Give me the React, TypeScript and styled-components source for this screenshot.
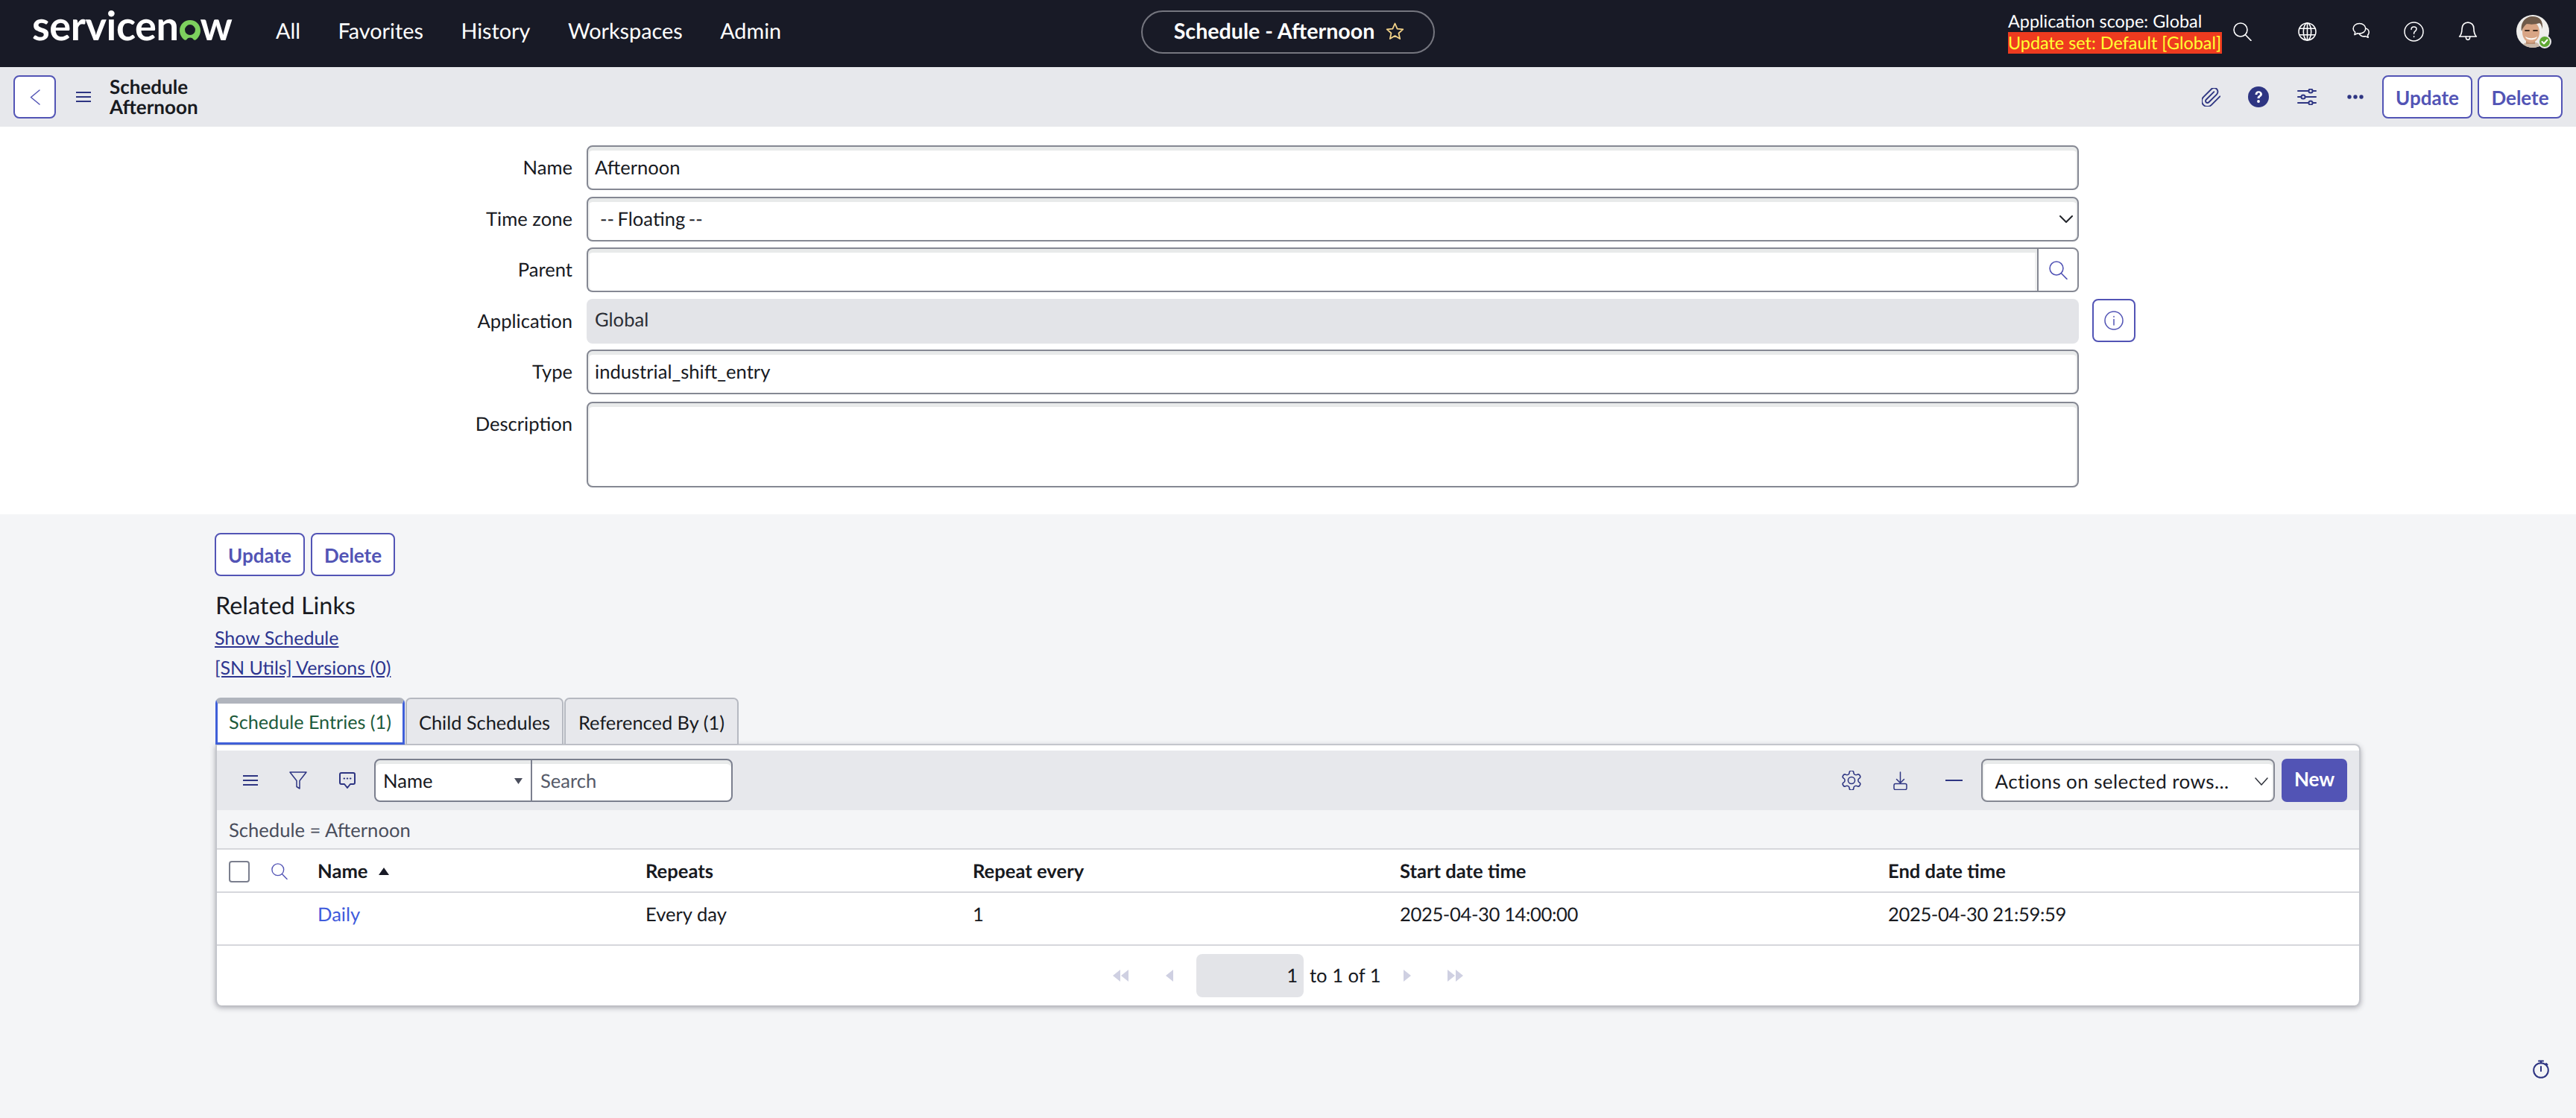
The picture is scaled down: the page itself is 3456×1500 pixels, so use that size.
import React from "react";
import styled, { createGlobalStyle } from "styled-components";

const Global = createGlobalStyle`
  html, body { margin: 0; padding: 0; background: #f4f5f7; }
  body {
    width: 3456px; height: 1500px; overflow: hidden;
    font-family: Lato, "Liberation Sans", sans-serif;
    font-size: 25.6px; color: #181a1f;
    text-rendering: geometricPrecision;
    -webkit-font-smoothing: antialiased;
  }
  * { box-sizing: border-box; }
`;

const Page = styled.div`
  width: 3456px; height: 1500px; display: flex; flex-direction: column;
`;

/* ---------- drawing helper ---------- */
const Glyph = styled.svg<{ $w: number; $h?: number; $c?: string; $sw?: number; $butt?: boolean }>`
  width: ${(p) => p.$w}px;
  height: ${(p) => p.$h ?? p.$w}px;
  flex: none;
  display: block;
  fill: none;
  stroke: ${(p) => p.$c ?? "#2e3582"};
  stroke-width: ${(p) => p.$sw ?? 1.5};
  stroke-linecap: ${(p) => (p.$butt ? "butt" : "round")};
  stroke-linejoin: round;
`;

/* ---------- top bar ---------- */
const TopBar = styled.header`
  height: 90px; flex: none; background: #181a26; color: #fff;
  display: grid; grid-template-columns: 1531px 394px 1fr; align-items: center;
`;
const BrandNav = styled.div`
  display: flex; align-items: center; padding-left: 43px;
`;
const Logo = styled.div`
  width: 266px; height: 54px; display: flex; align-items: baseline; margin-bottom: 22px;
  font-size: 54px; font-weight: 700; letter-spacing: -0.4px; color: #fff; line-height: 1;
`;
const LogoO = styled(Glyph)`
  margin: 0 0 0 1px;
`;
const Nav = styled.nav`
  display: flex; align-items: center; margin-left: 61px; gap: 50.5px; margin-bottom: 6px;
`;
const NavItem = styled.span`
  font-size: 28.8px; color: #fff; white-space: nowrap;
`;
const TitlePill = styled.div`
  height: 58px; margin-bottom: 4px; border: 2px solid #75767f; border-radius: 29px; padding: 0 0 2px 3px;
  display: flex; align-items: center; justify-content: center; gap: 15px;
  font-size: 28.6px; font-weight: 700; color: #fff; white-space: nowrap;
`;
const TopRight = styled.div`
  display: flex; align-items: center; padding-left: 769px; height: 90px;
`;
const Scope = styled.div`
  display: flex; flex-direction: column; align-items: flex-start; width: 302px;
  font-size: 23.4px; margin-bottom: 4px;
`;
const ScopeLine = styled.span`
  line-height: 29px; height: 29px; white-space: nowrap;
`;
const UpdateSet = styled.span`
  line-height: 29px; height: 29px; white-space: nowrap;
  background: #ee3b1f; color: #ffff33; padding-right: 1px;
`;
const TopIcons = styled.div`
  display: flex; align-items: center; margin-bottom: 6px;
`;
const TopIconSlot = styled.span<{ $w: number }>`
  width: ${(p) => p.$w}px; display: flex;
`;
const Avatar = styled.div`
  position: relative; width: 44px; height: 44px;
`;
const AvatarPhoto = styled(Glyph)`
  border-radius: 50%;
`;
const AvatarBadge = styled.span`
  position: absolute; right: -3px; bottom: -1px; width: 18px; height: 18px; border-radius: 50%;
  background: #5ea832; border: 2px solid #e9e9ea; display: flex; align-items: center; justify-content: center;
`;

/* ---------- sub header ---------- */
const SubHeader = styled.div`
  height: 80px; flex: none; background: #e7e8ec;
  display: flex; align-items: center; padding: 0 18px;
`;
const OutlineButton = styled.button<{ $w: number }>`
  width: ${(p) => p.$w}px; height: 58px; padding: 1px 0 0; flex: none;
  background: #fff; border: 2px solid #5254b5; border-radius: 8px;
  display: flex; align-items: center; justify-content: center;
  font-family: inherit; font-size: 26px; font-weight: 700; color: #5254b5;
`;
const Crumb = styled.div`
  display: flex; align-items: center; margin-left: 27px; gap: 25px; margin-top: -1px;
`;
const CrumbTitle = styled.div`
  font-size: 26px; font-weight: 700; line-height: 27px; color: #181a1f;
`;
const SubActions = styled.div`
  margin-left: auto; display: flex; align-items: center;
`;
const ActionSlot = styled.span<{ $w: number }>`
  width: ${(p) => p.$w}px; display: flex;
`;
const ButtonPair = styled.div<{ $gap: number }>`
  display: flex; gap: ${(p) => p.$gap}px;
`;

/* ---------- form ---------- */
const FormPanel = styled.section`
  height: 520px; flex: none; background: #fff; padding: 25px 0 0 0;
`;
const FormRow = styled.div<{ $h?: number; $after?: number }>`
  display: grid; grid-template-columns: 768px 2002px auto; column-gap: 19px;
  padding-left: 0; height: ${(p) => p.$h ?? 58}px; margin-bottom: ${(p) => p.$after ?? 10.5}px;
`;
const Label = styled.label`
  text-align: right; font-size: 25.6px; line-height: 60px; color: #181a1f;
`;
const FieldBase = styled.div`
  height: 100%; width: 100%; border: 2px solid #858893; border-radius: 8px; background: #fff;
  box-shadow: inset 0 5px 0 #e8eaea, inset 2px 0 0 #f0f1f1, inset -2px 0 0 #f0f1f1;
  font-size: 25.6px; line-height: 54px; padding: 0 9px; display: flex; align-items: center;
  justify-content: space-between; color: #181a1f;
`;
const SelectText = styled.span`
  padding-left: 7px; word-spacing: -2px;
`;
const SelectChevron = styled(Glyph)`
  margin-right: -3px;
`;
const ReadOnly = styled.div`
  height: 100%; background: #e3e4e8; border-radius: 8px; font-size: 25.6px; line-height: 56px; padding: 0 11px;
  color: #2b2e36;
`;
const ParentField = styled.div`
  display: flex; height: 100%;
`;
const ParentInput = styled(FieldBase)`
  border-right: 0; border-radius: 8px 0 0 8px; flex: 1; box-shadow: inset 0 5px 0 #e8eaea, inset 2px 0 0 #f0f1f1, inset -3px 0 0 #f0f1f1;
`;
const LookupButton = styled.div`
  width: 56px; flex: none; border: 2px solid #858893; border-radius: 0 8px 8px 0; background: #fff;
  display: flex; align-items: center; justify-content: center;
`;
const InfoButton = styled(OutlineButton)`
  margin-left: -1px;
`;

/* ---------- lower section ---------- */
const Lower = styled.section`
  padding: 25px 289px 0 288px; flex: 1; display: flex; flex-direction: column; min-height: 0;
`;
const RelatedTitle = styled.h2`
  margin: 15px 0 0 1px; font-size: 32.4px; font-weight: 400; line-height: 48px; color: #181a1f;
`;
const RelatedLink = styled.a`
  display: block; width: max-content; font-size: 25px; line-height: 40px; color: #2d3590; text-decoration: underline;
`;
const Tabs = styled.div`
  display: flex; margin: 20px 0 0 1px; height: 63px; align-items: stretch; position: relative; z-index: 1; gap: 1px;
`;
const ActiveTab = styled.div`
  width: 254px; border-radius: 7px 7px 0 0; background: #fff; display: flex; align-items: center; justify-content: center;
  border-style: solid; border-color: #b0b4bd #3f5fd8 #3f5fd8; border-width: 8px 3px 3px; color: #1d5b3b; font-size: 25.2px; padding-bottom: 2px;
`;
const Tab = styled.div<{ $w: number }>`
  width: ${(p) => p.$w}px; border: 2px solid #b6b9c1; border-bottom-width: 1px; border-radius: 7px 7px 0 0; background: #e7e8ec;
  display: flex; align-items: center; justify-content: center; font-size: 25.4px; padding-top: 3px; color: #181a1f;
`;
const Card = styled.div`
  margin: -1px 0 0 1px; background: #fff; border: 2px solid #c4c6cc; border-width: 2px 2px 0 2px; border-radius: 0 8px 8px 8px;
  box-shadow: 0 3px 7px rgba(60, 60, 75, 0.42); height: 351px; overflow: hidden; display: flex; flex-direction: column;
`;
const Toolbar = styled.div`
  margin-top: 7px; height: 80px; background: #e7e8ec; flex: none; display: flex; align-items: center; padding: 0 16px 0 0;
`;
const ToolIcons = styled.div`
  display: flex; align-items: center; padding-left: 35px; width: 211px;
`;
const ToolSlot = styled.span<{ $w: number }>`
  width: ${(p) => p.$w}px; display: flex;
`;
const SearchCombo = styled.div`
  width: 481px; height: 58px; display: flex; border: 2px solid #7b7f8e; border-radius: 8px; background: #fff; overflow: hidden;
  box-shadow: inset 0 5px 0 #e8eaea;
`;
const ComboSelect = styled.div`
  width: 210px; flex: none; border-right: 2px solid #7b7f8e; display: flex; align-items: center; justify-content: space-between;
  padding: 2px 11px 0 10px; font-size: 25.6px; color: #181a1f;
`;
const ComboInput = styled.div`
  flex: 1; display: flex; align-items: center; padding: 2px 0 0 11px; font-size: 25.6px; color: #555a68;
`;
const ToolRight = styled.div`
  margin-left: auto; display: flex; align-items: center;
`;
const ActionSelect = styled(FieldBase)`
  width: 394.5px; height: 58px; padding: 2px 7px 0 17px; font-size: 26px; letter-spacing: 0.4px;
`;
const NewButton = styled.button`
  margin-left: 9px; width: 88px; height: 58px; border: 0; border-radius: 7px; background: #5254b5; color: #fff;
  font-family: inherit; font-size: 26px; font-weight: 700; padding: 0 0 4px;
`;
const BreadcrumbRow = styled.div`
  height: 53px; flex: none; background: #f4f5f7; border-bottom: 2px solid #d6d7dc; padding-left: 16px;
  line-height: 54px; font-size: 25.6px; color: #4a4e5c;
`;
const TableGrid = styled.div`
  display: grid; grid-template-columns: 135px 440px 439px 573px 655px 1fr;
  align-items: center; padding-left: 0;
`;
const HeadRow = styled(TableGrid)`
  height: 58px; flex: none; border-bottom: 2px solid #d6d7dc; font-weight: 700; font-size: 25.6px; padding-top: 2px;
`;
const DataRow = styled(TableGrid)`
  height: 71px; flex: none; border-bottom: 2px solid #d6d7dc; font-size: 25.6px; padding-bottom: 12px;
`;
const HeadTools = styled.div`
  display: flex; align-items: center; gap: 29px; padding-left: 16px;
`;
const CheckBox = styled.span`
  width: 28px; height: 29px; flex: none; background: #fff; border: 2px solid #7b7f8e; border-radius: 4px;
`;
const SortedHead = styled.div`
  display: flex; align-items: center; gap: 15px;
`;
const RowLink = styled.a`
  color: #3f5bdc;
`;
const DateCell = styled.span`
  letter-spacing: -0.38px;
`;
const Pager = styled.div`
  flex: 1; display: flex; align-items: center; padding-left: 1202px;
`;
const PagerSlot = styled.span<{ $w: number }>`
  width: ${(p) => p.$w}px; display: flex;
`;
const PageBox = styled.div`
  width: 144px; height: 58px; background: #e3e4e8; border-radius: 8px; text-align: right; padding-right: 8px; line-height: 58px; font-size: 25.6px;
`;
const PageText = styled.span`
  margin-left: 8px; width: 126px; font-size: 25.6px; white-space: nowrap;
`;
const Foot = styled.div`
  margin-top: auto; margin-bottom: 53px; margin-right: -253px; display: flex; justify-content: flex-end;
`;

/* ---------- icons ---------- */
const Search = ({ size = 25, c = "#fff" }: { size?: number; c?: string }) => (
  <Glyph $w={size} $c={c} viewBox="0 0 24 24">
    <circle cx="9.600" cy="9.600" r="8.600" />
    <path d="M15.600 15.800 23 23.400" />
  </Glyph>
);
const Hamburger = ({ w = 20, h = 14 }: { w?: number; h?: number }) => (
  <Glyph $w={w} $h={h} $sw={2} $butt viewBox="0 0 20 14" preserveAspectRatio="none">
    <path d="M0 1h20M0 7h20M0 13h20" />
  </Glyph>
);
const Tri = ({ dir, c = "#cfd0e2" }: { dir: "l" | "r"; c?: string }) => (
  <path d={dir === "l" ? "M10 0 0 8l10 8z" : "M0 0l10 8-10 8z"} fill={c} stroke="none" />
);

const App = () => (
  <Page>
    <Global />
    <TopBar>
      <BrandNav>
        <Logo>
          servicen
          <LogoO $w={28} $h={27} viewBox="0 0 32 31" stroke="none">
            <path
              d="M16 0C7 0 0 7 0 16c0 6 3 11 7 14 1.500 1 3 .8 4-.5 1-1.500 3-2.500 5-2.500s4 1 5 2.500c1 1.300 2.500 1.500 4 .5 4-3 7-8 7-14C32 7 25 0 16 0zm0 23a8 8 0 1 1 0-16 8 8 0 0 1 0 16z"
              fill="#7dd05e"
              stroke="none"
            />
          </LogoO>
          w
        </Logo>
        <Nav>
          <NavItem>All</NavItem>
          <NavItem>Favorites</NavItem>
          <NavItem>History</NavItem>
          <NavItem>Workspaces</NavItem>
          <NavItem>Admin</NavItem>
        </Nav>
      </BrandNav>
      <TitlePill>
        Schedule - Afternoon
        <Glyph $w={25} $h={24} $c="#f4d389" $sw={1.8} viewBox="0 0 24 24">
          <path d="M12 1.500l3.100 7.200 7.700.7-5.800 5.100 1.700 7.600-6.700-4-6.700 4 1.700-7.600L1.200 9.400l7.700-.7z" />
        </Glyph>
      </TitlePill>
      <TopRight>
        <Scope>
          <ScopeLine>Application scope: Global</ScopeLine>
          <UpdateSet>Update set: Default [Global]</UpdateSet>
        </Scope>
        <TopIcons>
          <TopIconSlot $w={87}><Search /></TopIconSlot>
          <TopIconSlot $w={72}>
            <Glyph $w={25} $c="#fff" viewBox="0 0 24 24">
              <circle cx="12" cy="12" r="11" />
              <ellipse cx="12" cy="12" rx="5" ry="11" />
              <path d="M12 1v22M2 8h20M2 16h20" />
            </Glyph>
          </TopIconSlot>
          <TopIconSlot $w={70}>
            <Glyph $w={25} $c="#fff" viewBox="0 0 24 24">
              <path d="M10 1.500c-4.500 0-8 2.800-8 6.500 0 1.900.9 3.500 2.500 4.700L3.800 16l3.700-1.800c.8.200 1.600.3 2.500.3 4.500 0 8-2.800 8-6.500S14.500 1.500 10 1.500z" />
              <path d="M18.500 7.800c2.300.9 3.800 2.700 3.800 4.900 0 1.400-.6 2.700-1.700 3.700l.7 3.100-3.400-1.600c-.6.100-1.200.2-1.900.2-2.700 0-5-1.300-6-3.100" />
            </Glyph>
          </TopIconSlot>
          <TopIconSlot $w={73}>
            <Glyph $w={27} $c="#fff" viewBox="0 0 27 27">
              <circle cx="13.500" cy="13.500" r="12.500" />
              <path d="M10 10.500c0-2 1.500-3.500 3.600-3.500 2 0 3.400 1.300 3.400 3 0 2.800-3.400 2.800-3.400 5.500v.8M13.600 19.800v.8" />
            </Glyph>
          </TopIconSlot>
          <TopIconSlot $w={78}>
            <Glyph $w={26} $c="#fff" viewBox="0 0 24 24">
              <path d="M12 1c-4.300 0-7.300 3.200-7.300 7.500 0 5.500-1 7.700-3.200 10h21c-2.200-2.300-3.200-4.500-3.200-10C19.300 4.200 16.300 1 12 1z" />
              <path d="M9.500 18.700c0 2 1 3.800 2.500 3.800s2.500-1.800 2.500-3.800" />
            </Glyph>
          </TopIconSlot>
          <Avatar>
            <AvatarPhoto $w={44} viewBox="0 0 44 44" stroke="none">
              <rect width="44" height="44" fill="#efeeec" stroke="none" />
              <path d="M6 44c2-6 8-8 14-8s12 2 15 8z" fill="#c9b8a8" stroke="none" />
              <path d="M13 30h12v9H13z" fill="#b98d70" stroke="none" />
              <ellipse cx="19.500" cy="23" rx="11.500" ry="14.500" fill="#d8a585" stroke="none" />
              <path d="M7 22C5 10 12 2 22 2c9 0 14 5 13 17-1-4-2-7-4-8-6 2-13 2-17 1-3 2-5 5-7 10z" fill="#6f5a49" stroke="none" />
              <path d="M12 21h5M23 21h5" stroke="#3f2c20" strokeWidth="1.800" />
              <path d="M12 29c5 3 11 3 16 0-1 6-15 6-16 0z" fill="#fbf6f0" stroke="none" />
            </AvatarPhoto>
            <AvatarBadge>
              <Glyph $w={10} $c="#fff" $sw={2} viewBox="0 0 10 10">
                <path d="M1.500 5 4 7.500l4.500-5" />
              </Glyph>
            </AvatarBadge>
          </Avatar>
        </TopIcons>
      </TopRight>
    </TopBar>

    <SubHeader>
      <OutlineButton $w={57}>
        <Glyph $w={14} $h={21} $c="#5254b5" viewBox="0 0 14 21">
          <path d="M13 1 1.500 10.500 13 20" />
        </Glyph>
      </OutlineButton>
      <Crumb>
        <Hamburger />
        <CrumbTitle>
          Schedule
          <br />
          Afternoon
        </CrumbTitle>
      </Crumb>
      <SubActions>
        <ActionSlot $w={62}>
          <Glyph $w={25} $sw={1.5} viewBox="2 2 20 20">
            <path d="m21.440 11.050-9.190 9.190a6 6 0 0 1-8.490-8.490l8.570-8.570A4 4 0 1 1 18 8.840l-8.590 8.570a2 2 0 0 1-2.830-2.830l8.490-8.480" />
          </Glyph>
        </ActionSlot>
        <ActionSlot $w={66}>
          <Glyph $w={28} viewBox="0 0 28 28" stroke="none">
            <circle cx="14" cy="14" r="14" fill="#2e3582" stroke="none" />
            <path d="M9.500 11c0-3 2-4.800 4.700-4.800S19 8 19 10.300c0 3.400-3.500 3.300-3.500 5.700h-3c0-3.800 3.500-3.800 3.500-5.700 0-1-.7-1.700-1.800-1.700-1.200 0-1.800 1-1.800 2.400z" fill="#fff" stroke="none" />
            <circle cx="14" cy="20" r="1.900" fill="#fff" stroke="none" />
          </Glyph>
        </ActionSlot>
        <ActionSlot $w={67}>
          <Glyph $w={26} $h={22} $sw={2} viewBox="0 0 26 22">
            <path d="M1 3h14M21 3h4M1 11h4M11 11h14M1 19h14M21 19h4" />
            <circle cx="18" cy="3" r="2.600" />
            <circle cx="8" cy="11" r="2.600" />
            <circle cx="18" cy="19" r="2.600" />
          </Glyph>
        </ActionSlot>
        <ActionSlot $w={47}>
          <Glyph $w={22} $h={6} viewBox="0 0 22 6" stroke="none">
            <circle cx="3" cy="3" r="2.700" fill="#2e3582" stroke="none" />
            <circle cx="11" cy="3" r="2.700" fill="#2e3582" stroke="none" />
            <circle cx="19" cy="3" r="2.700" fill="#2e3582" stroke="none" />
          </Glyph>
        </ActionSlot>
        <ButtonPair $gap={7}>
          <OutlineButton $w={121}>Update</OutlineButton>
          <OutlineButton $w={114}>Delete</OutlineButton>
        </ButtonPair>
      </SubActions>
    </SubHeader>

    <FormPanel>
      <FormRow>
        <Label>Name</Label>
        <FieldBase>Afternoon</FieldBase>
      </FormRow>
      <FormRow>
        <Label>Time zone</Label>
        <FieldBase>
          <SelectText>-- Floating --</SelectText>
          <SelectChevron $w={18} $h={10} $c="#22252b" $sw={2} viewBox="0 0 18 10">
            <path d="M1 1l8 8 8-8" />
          </SelectChevron>
        </FieldBase>
      </FormRow>
      <FormRow>
        <Label>Parent</Label>
        <ParentField>
          <ParentInput />
          <LookupButton>
            <Search c="#5254b5" />
          </LookupButton>
        </ParentField>
      </FormRow>
      <FormRow>
        <Label>Application</Label>
        <ReadOnly>Global</ReadOnly>
        <InfoButton $w={58}>
          <Glyph $w={26} $c="#5254b5" viewBox="0 0 26 26">
            <circle cx="13" cy="13" r="12" />
            <path d="M13 11.500V19M13 7.500v.8" />
          </Glyph>
        </InfoButton>
      </FormRow>
      <FormRow $after={11.5}>
        <Label>Type</Label>
        <FieldBase>industrial_shift_entry</FieldBase>
      </FormRow>
      <FormRow $h={115}>
        <Label>Description</Label>
        <FieldBase />
      </FormRow>
    </FormPanel>

    <Lower>
      <ButtonPair $gap={8}>
        <OutlineButton $w={121}>Update</OutlineButton>
        <OutlineButton $w={113}>Delete</OutlineButton>
      </ButtonPair>
      <RelatedTitle>Related Links</RelatedTitle>
      <RelatedLink>Show Schedule</RelatedLink>
      <RelatedLink>[SN Utils] Versions (0)</RelatedLink>
      <Tabs>
        <ActiveTab>Schedule Entries (1)</ActiveTab>
        <Tab $w={212}>Child Schedules</Tab>
        <Tab $w={234}>Referenced By (1)</Tab>
      </Tabs>
      <Card>
        <Toolbar>
          <ToolIcons>
            <ToolSlot $w={62}><Hamburger /></ToolSlot>
            <ToolSlot $w={67}>
              <Glyph $w={24} viewBox="0 0 24 24">
                <path d="M1 1h22L14 12.500V23l-4-2.500v-8z" />
              </Glyph>
            </ToolSlot>
            <ToolSlot $w={22}>
              <Glyph $w={22} $sw={2} viewBox="0 0 22 22">
                <path d="M3 1h16a2 2 0 0 1 2 2v11a2 2 0 0 1-2 2h-4l-4 5-4-5H3a2 2 0 0 1-2-2V3a2 2 0 0 1 2-2z" />
                <path d="M6.500 8.500h.6M10.700 8.500h.6M14.900 8.500h.6" />
              </Glyph>
            </ToolSlot>
          </ToolIcons>
          <SearchCombo>
            <ComboSelect>
              Name
              <Glyph $w={11} $h={8} viewBox="0 0 11 8" stroke="none">
                <path d="M0 0h11L5.500 8z" fill="#4a4e5c" stroke="none" />
              </Glyph>
            </ComboSelect>
            <ComboInput>Search</ComboInput>
          </SearchCombo>
          <ToolRight>
            <ToolSlot $w={69}>
              <Glyph $w={26} $sw={1.2} viewBox="2 2 20 20">
                <path d="M12.220 2h-.44a2 2 0 0 0-2 2v.18a2 2 0 0 1-1 1.730l-.43.25a2 2 0 0 1-2 0l-.15-.08a2 2 0 0 0-2.730.730l-.22.380a2 2 0 0 0 .73 2.730l.15.1a2 2 0 0 1 1 1.720v.51a2 2 0 0 1-1 1.740l-.15.09a2 2 0 0 0-.73 2.730l.22.380a2 2 0 0 0 2.730.730l.15-.08a2 2 0 0 1 2 0l.43.25a2 2 0 0 1 1 1.730V20a2 2 0 0 0 2 2h.44a2 2 0 0 0 2-2v-.18a2 2 0 0 1 1-1.730l.43-.25a2 2 0 0 1 2 0l.15.08a2 2 0 0 0 2.730-.730l.22-.390a2 2 0 0 0-.73-2.730l-.15-.08a2 2 0 0 1-1-1.740v-.5a2 2 0 0 1 1-1.740l.15-.09a2 2 0 0 0 .73-2.730l-.22-.380a2 2 0 0 0-2.730-.730l-.15.08a2 2 0 0 1-2 0l-.43-.25a2 2 0 0 1-1-1.730V4a2 2 0 0 0-2-2z" />
                <circle cx="12" cy="12" r="3.500" />
              </Glyph>
            </ToolSlot>
            <ToolSlot $w={70}>
              <Glyph $w={19} $h={25} viewBox="0 0 19 25">
                <path d="M9.500 1v14M4.500 10.500l5 5 5-5" />
                <rect x="1" y="16.500" width="17" height="8" rx="2" />
              </Glyph>
            </ToolSlot>
            <ToolSlot $w={48}>
              <Glyph $w={23} $h={2} $sw={2} $butt viewBox="0 0 23 2">
                <path d="M0 1h23" />
              </Glyph>
            </ToolSlot>
            <ActionSelect>
              Actions on selected rows...
              <Glyph $w={18} $h={11} $c="#30333c" viewBox="0 0 18 11">
                <path d="M1 1l8 9 8-9" />
              </Glyph>
            </ActionSelect>
            <NewButton>New</NewButton>
          </ToolRight>
        </Toolbar>
        <BreadcrumbRow>Schedule = Afternoon</BreadcrumbRow>
        <HeadRow>
          <HeadTools>
            <CheckBox />
            <Search size={22} c="#5254b5" />
          </HeadTools>
          <SortedHead>
            Name
            <Glyph $w={14} $h={10} viewBox="0 0 14 10" stroke="none">
              <path d="M7 0l7 10H0z" fill="#181a26" stroke="none" />
            </Glyph>
          </SortedHead>
          <span>Repeats</span>
          <span>Repeat every</span>
          <span>Start date time</span>
          <span>End date time</span>
        </HeadRow>
        <DataRow>
          <span />
          <RowLink>Daily</RowLink>
          <span>Every day</span>
          <span>1</span>
          <DateCell>2025-04-30 14:00:00</DateCell>
          <DateCell>2025-04-30 21:59:59</DateCell>
        </DataRow>
        <Pager>
          <PagerSlot $w={71}>
            <Glyph $w={21} $h={16} viewBox="0 0 21 16" stroke="none"><Tri dir="l" /><g transform="translate(11)"><Tri dir="l" /></g></Glyph>
          </PagerSlot>
          <PagerSlot $w={41}>
            <Glyph $w={10} $h={16} viewBox="0 0 10 16" stroke="none"><Tri dir="l" /></Glyph>
          </PagerSlot>
          <PageBox>1</PageBox>
          <PageText>to 1 of 1</PageText>
          <PagerSlot $w={59}>
            <Glyph $w={10} $h={16} viewBox="0 0 10 16" stroke="none"><Tri dir="r" /></Glyph>
          </PagerSlot>
          <PagerSlot $w={21}>
            <Glyph $w={21} $h={16} viewBox="0 0 21 16" stroke="none"><Tri dir="r" /><g transform="translate(11)"><Tri dir="r" /></g></Glyph>
          </PagerSlot>
        </Pager>
      </Card>
      <Foot>
        <Glyph $w={22} $h={25} $sw={2} viewBox="0 0 22 25">
          <circle cx="11" cy="14" r="9.800" />
          <path d="M8 1.500h6M11 1.500v3M18 5l1.500 1.500M11 9v6" />
        </Glyph>
      </Foot>
    </Lower>
  </Page>
);

export default App;
